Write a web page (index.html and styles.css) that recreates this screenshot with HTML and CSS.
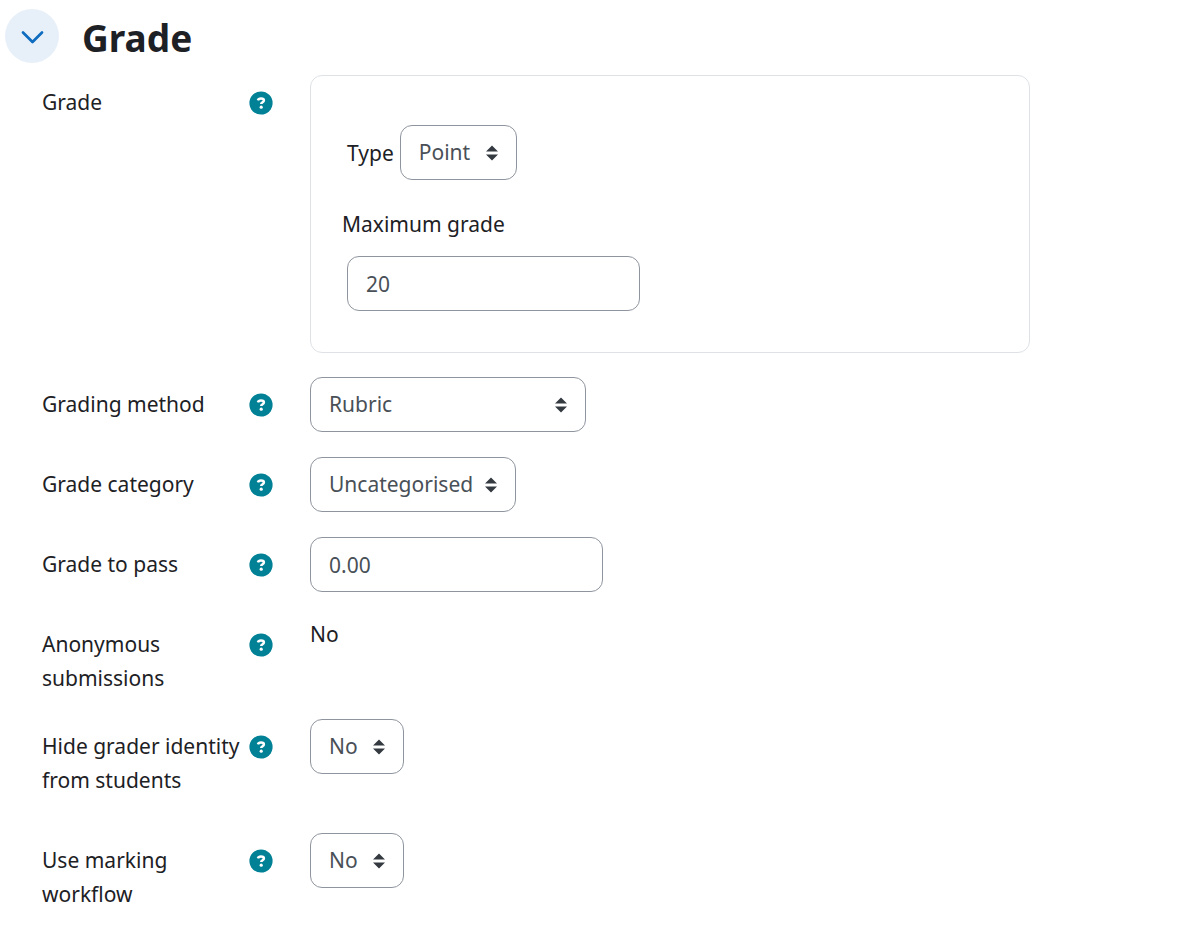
FILE: index.html
```html
<!DOCTYPE html>
<html lang="en">
<head>
<meta charset="utf-8">
<meta name="viewport" content="width=device-width, initial-scale=1">
<title>Grade</title>
<link rel="stylesheet" href="styles.css">
</head>
<body>
<svg class="sprite" aria-hidden="true">
  <symbol id="help" viewBox="0 0 24 24">
    <circle cx="12" cy="12" r="11.6" fill="#008196"/>
    <path d="M8.900 9.300C9.300 8 10.500 7.400 12 7.400c1.800 0 2.900.7 2.900 2 0 1.900-2.700 1.700-2.700 3.700" fill="none" stroke="#fff" stroke-width="2.500"/>
    <circle cx="12.200" cy="16.200" r="1.600" fill="#fff"/>
  </symbol>
  <symbol id="arrows" viewBox="0 0 12 16">
    <path d="M0 6.500 6 .5l6 6zM0 9.500h12l-6 6z" fill="#343a40"/>
  </symbol>
</svg>
<form class="form">
  <header class="section-head">
    <button class="toggle" type="button" aria-expanded="true" aria-label="Collapse Grade">
      <svg class="chevron" viewBox="0 0 24 16" aria-hidden="true"><path d="M3 3.500 12.500 13l9.500-9.500" fill="none" stroke="#0f6cbf" stroke-width="2.700" stroke-linecap="round" stroke-linejoin="round"/></svg>
    </button>
    <h1 class="title">Grade</h1>
  </header>
  <div class="rows">
    <div class="row">
      <div class="caption"><span id="grade-label">Grade</span><button class="help" type="button" aria-label="Help with Grade"><svg class="help-icon" aria-hidden="true"><use href="#help"/></svg></button></div>
      <div class="panel" role="group" aria-labelledby="grade-label">
        <div class="inline-field">
          <label for="type">Type</label>
          <div class="select select-medium"><select class="control" id="type"><option>Point</option></select><svg class="arrows" aria-hidden="true"><use href="#arrows"/></svg></div>
        </div>
        <label class="max-label" for="max">Maximum grade</label>
        <input class="control text-input panel-input" id="max" type="text" value="20">
      </div>
    </div>
    <div class="row">
      <div class="caption"><label for="method">Grading method</label><button class="help" type="button" aria-label="Help with Grading method"><svg class="help-icon" aria-hidden="true"><use href="#help"/></svg></button></div>
      <div class="select select-wide"><select class="control" id="method"><option>Rubric</option></select><svg class="arrows" aria-hidden="true"><use href="#arrows"/></svg></div>
    </div>
    <div class="row">
      <div class="caption"><label for="category">Grade category</label><button class="help" type="button" aria-label="Help with Grade category"><svg class="help-icon" aria-hidden="true"><use href="#help"/></svg></button></div>
      <div class="select select-large"><select class="control" id="category"><option>Uncategorised</option></select><svg class="arrows" aria-hidden="true"><use href="#arrows"/></svg></div>
    </div>
    <div class="row">
      <div class="caption"><label for="pass">Grade to pass</label><button class="help" type="button" aria-label="Help with Grade to pass"><svg class="help-icon" aria-hidden="true"><use href="#help"/></svg></button></div>
      <input class="control text-input" id="pass" type="text" value="0.00">
    </div>
    <div class="row">
      <div class="caption"><span>Anonymous submissions</span><button class="help" type="button" aria-label="Help with Anonymous submissions"><svg class="help-icon" aria-hidden="true"><use href="#help"/></svg></button></div>
      <span>No</span>
    </div>
    <div class="row row-roomy">
      <div class="caption"><label for="hide">Hide grader identity from students</label><button class="help" type="button" aria-label="Help with Hide grader identity from students"><svg class="help-icon" aria-hidden="true"><use href="#help"/></svg></button></div>
      <div class="select select-small"><select class="control" id="hide"><option>No</option></select><svg class="arrows" aria-hidden="true"><use href="#arrows"/></svg></div>
    </div>
    <div class="row row-roomy">
      <div class="caption"><label for="workflow">Use marking workflow</label><button class="help" type="button" aria-label="Help with Use marking workflow"><svg class="help-icon" aria-hidden="true"><use href="#help"/></svg></button></div>
      <div class="select select-small"><select class="control" id="workflow"><option>No</option></select><svg class="arrows" aria-hidden="true"><use href="#arrows"/></svg></div>
    </div>
  </div>
</form>
</body>
</html>
```
FILE: styles.css
```css
* { box-sizing: border-box; }

body {
  margin: 0;
  background: #fff;
  color: #1d2125;
  font: 21px/34px "Segoe UI", "Noto Sans", "Open Sans", sans-serif;
}

.sprite { position: absolute; width: 0; height: 0; }

.form { padding: 9px 5px 0; }

.section-head {
  display: flex;
  align-items: flex-start;
  gap: 23px;
  margin-bottom: 8px;
}

.toggle {
  display: grid;
  place-items: center;
  width: 54px;
  height: 54px;
  padding: 2px 0 0;
  border: 0;
  border-radius: 50%;
  background: #e7f0f9;
}

.chevron { width: 24px; height: 16px; }

.title {
  margin: 0;
  font-size: 37px;
  line-height: 58px;
  font-weight: 700;
}

.rows {
  display: grid;
  gap: 24px;
  padding-left: 37px;
}

.row {
  display: grid;
  grid-template-columns: 231px minmax(0, 720px);
  column-gap: 37px;
  align-items: start;
  justify-items: start;
  min-height: 56px;
}

.row-roomy { padding-bottom: 12px; }

.caption {
  display: flex;
  justify-content: space-between;
  align-items: flex-start;
  gap: 4px;
  width: 100%;
  padding-top: 10px;
}

.help {
  display: flex;
  align-items: center;
  flex: none;
  height: 36px;
  padding: 0;
  border: 0;
  background: none;
}

.help-icon { width: 24px; height: 24px; }

.panel {
  width: 100%;
  padding: 49px 31px 41px;
  border: 1px solid #dee2e6;
  border-radius: 12px;
}

.inline-field {
  display: flex;
  align-items: center;
  gap: 6px;
  padding-left: 5px;
}

.select { display: grid; align-items: center; }

.select > * { grid-area: 1 / 1; }

.select-small { width: 94px; }

.select-medium { width: 117px; }

.select-large { width: 206px; }

.select-wide { width: 276px; }

.control {
  height: 55px;
  padding: 0 18px;
  border: 1px solid #8f959e;
  border-radius: 12px;
  background: #fff;
  color: #495057;
  font: inherit;
}

select.control { appearance: none; padding: 0 38px 2px 18px; }

.arrows {
  width: 12px;
  height: 16px;
  margin-right: 19px;
  justify-self: end;
  pointer-events: none;
}

.text-input { width: 293px; }

.max-label { display: block; margin: 27px 0 15px; }

.panel-input { display: block; margin-left: 5px; }
```
